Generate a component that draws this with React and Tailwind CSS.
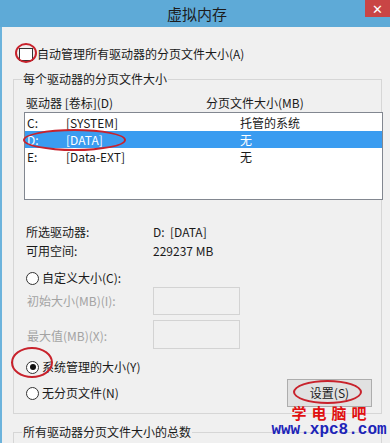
const font = { fontFamily: '"Noto Sans CJK SC", "Noto Sans", sans-serif' };

function Radio({ checked }) {
  return (
    <span className="w-[13px] h-[13px] rounded-full border border-[#333] bg-white flex items-center justify-center shrink-0">
      {checked && <span className="w-[6px] h-[6px] rounded-full bg-[#111]" />}
    </span>
  );
}

function Ring({ className }) {
  return (
    <span
      className={
        "absolute rounded-[50%] border-2 border-[#c8222c] pointer-events-none " +
        className
      }
    />
  );
}

const drives = [
  { letter: "C:", label: "[SYSTEM]", size: "托管的系统" },
  { letter: "D:", label: "[DATA]", size: "无", selected: true },
  { letter: "E:", label: "[Data-EXT]", size: "无" },
];

export default function App() {
  return (
    <div
      className="relative w-[390px] h-[443px] overflow-hidden bg-[#f0f0f0] text-[12px] leading-[16px] text-[#1a1a1a] shadow-[inset_2px_0_0_#6cb3dc]"
      style={font}
    >
      {/* title bar */}
      <div className="relative h-[27px] bg-[#5eaad7] flex items-center justify-center">
        <span className="text-[15px] text-[#1c1c1c] pl-[4px]">虚拟内存</span>
        <span className="absolute top-0 right-0 w-[25px] h-[17px] bg-[#c94545] flex items-center justify-center text-white text-[13px] leading-none">
          ✕
        </span>
      </div>

      {/* auto manage */}
      <div className="mt-[20px] h-[14px] pl-[19px] flex items-center">
        <span className="w-[14px] h-[13px] border border-[#333] bg-white" />
        <span className="ml-[4px]">自动管理所有驱动器的分页文件大小(A)</span>
      </div>

      {/* per-drive group */}
      <div className="relative ml-[13px] mt-[18px] w-[369px] h-[335px] border border-[#d6d6d6]">
        <span className="absolute left-[8px] -top-[9px] px-[1px] bg-[#f0f0f0]">
          每个驱动器的分页文件大小
        </span>

        <div className="pt-[15px] pl-[12px] flex">
          <span className="w-[180px]">驱动器 [卷标](D)</span>
          <span>分页文件大小(MB)</span>
        </div>

        <div className="ml-[10px] mt-[1px] w-[359px] h-[88px] border border-[#828790] bg-white pt-[1px]">
          {drives.map((d) => (
            <div
              key={d.letter}
              className={
                "h-[17px] pl-[2px] flex items-center " +
                (d.selected ? "bg-[#3a9cf0] text-white" : "")
              }
            >
              <span className="w-[39px]">{d.letter}</span>
              <span className="w-[174px]">{d.label}</span>
              <span>{d.size}</span>
            </div>
          ))}
        </div>

        <div className="mt-[24px] pl-[12px] flex">
          <span className="w-[127px]">所选驱动器:</span>
          <span>D:&nbsp;&nbsp;[DATA]</span>
        </div>
        <div className="mt-[3px] pl-[12px] flex">
          <span className="w-[127px]">可用空间:</span>
          <span>229237 MB</span>
        </div>

        <div className="mt-[11px] pl-[12px] flex items-center gap-[3px]">
          <Radio />
          <span>自定义大小(C):</span>
        </div>

        <div className="mt-[1px] pl-[13px] h-[28px] flex items-center text-[#a3a3a3]">
          <span className="w-[126px]">初始大小(MB)(I):</span>
          <span className="w-[87px] h-[28px] border border-[#d3d3d3] bg-[#f0f0f0]" />
        </div>
        <div className="mt-[5px] pl-[13px] h-[29px] flex items-center text-[#a3a3a3]">
          <span className="w-[126px] pt-[3px]">最大值(MB)(X):</span>
          <span className="w-[87px] h-[29px] border border-[#d3d3d3] bg-[#f0f0f0]" />
        </div>

        <div className="mt-[10px] pl-[12px] flex items-center gap-[3px]">
          <Radio checked />
          <span>系统管理的大小(Y)</span>
        </div>

        <div className="mt-[4px] pl-[12px] pr-[9px] h-[28px] flex items-center justify-between">
          <div className="flex items-center gap-[3px]">
            <Radio />
            <span>无分页文件(N)</span>
          </div>
          <button className="w-[85px] h-[28px] border border-[#adadad] bg-[#e1e1e1] text-[12px]">
            设置(S)
          </button>
        </div>
      </div>

      {/* totals group */}
      <div className="relative ml-[13px] mt-[18px] w-[369px] h-[40px] border border-[#d6d6d6]">
        <span className="absolute left-[8px] -top-[9px] px-[1px] bg-[#f0f0f0]">
          所有驱动器分页文件大小的总数
        </span>
      </div>

      {/* watermark */}
      <div className="absolute left-[276px] top-[405px] w-[106px] flex flex-col items-center">
        <span className="text-[15px] leading-[16px] font-bold text-[#e01010] tracking-[5px] pl-[5px]">
          学电脑吧
        </span>
        <span
          className="text-[16px] leading-[19px] font-bold text-[#1c24b8] whitespace-nowrap"
          style={{ fontFamily: '"Liberation Mono", "DejaVu Sans Mono", monospace' }}
        >
          www.xpc8.com
        </span>
      </div>

      {/* red annotation rings */}
      <Ring className="left-[15px] top-[43px] w-[22px] h-[20px]" />
      <Ring className="left-[23px] top-[129px] w-[103px] h-[22px]" />
      <Ring className="left-[11px] top-[347px] w-[42px] h-[31px]" />
      <Ring className="left-[293px] top-[380px] w-[69px] h-[24px]" />
    </div>
  );
}
